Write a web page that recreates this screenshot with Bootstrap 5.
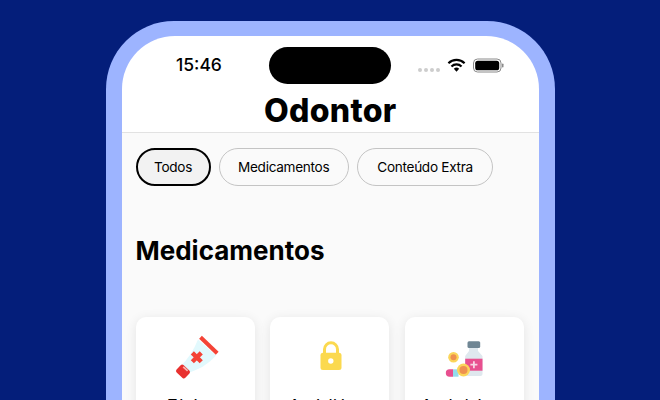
<!DOCTYPE html>
<html lang="pt-BR">
<head>
    <meta charset="UTF-8">
    <title>Odontor</title>
    <link href="https://cdn.jsdelivr.net/npm/bootstrap@5.3.0/dist/css/bootstrap.min.css" rel="stylesheet">
    <style>
        html, body { height: 400px; overflow: hidden; }
        body { background: #041e7a; font-family: Inter, "Liberation Sans", sans-serif; color: #000; }
        .phone-frame { width: 449px; height: 379px; margin: 21px 0 0 106px; padding: 15px 16px 0 15.5px; background: #9db4ff; border-radius: 68px 68px 0 0; }
        .phone-screen { height: 100%; background: #fff; border-radius: 53px 53px 0 0; overflow: hidden; }
        .status-bar { height: 48px; padding-top: 11px; }
        .status-left { width: 147.5px; padding: 8px 0 0 54.5px; font-size: 17.5px; font-weight: 500; line-height: 20px; }
        .island { width: 122px; height: 37px; background: #000; border-radius: 19px; }
        .status-right { padding: 11px 0 0 27px; gap: 7px; }
        .dots { gap: 2px; padding-top: 10px; }
        .dots span { width: 4px; height: 4px; border-radius: 50%; background: #cdcdcd; }
        .app-title { height: 49px; padding-top: 3px; border-bottom: 1px solid #e2e2e2; font-size: 32px; font-weight: 800; line-height: 48px; letter-spacing: .3px; margin: 0; }
        .app-body { background: #fafafa; padding: 15px 14px 0; height: 300px; }
        .chip { height: 38px; padding: 0 18.5px; border: 1px solid #c4c4c4; border-radius: 19px; font-size: 13.6px; letter-spacing: -.3px; line-height: 36px; background: transparent; color: #000; }
        .chip.active { padding: 0 16.5px; border: 2px solid #000; background: #f2f2f2; line-height: 34px; }
        .chip.chip-wide { padding: 0 19.5px; }
        .section-title { font-size: 26px; font-weight: 700; line-height: 32px; margin: 49px 0 50px; }
        .card-row { gap: 15.5px; }
        .med-card { width: 119px; height: 150px; padding-top: 16px; background: #fff; border-radius: 10px; box-shadow: 0 2px 12px rgba(0,0,0,.09); font-size: 14.5px; font-weight: 500; line-height: 20px; }
        .med-card svg { display: block; margin: 0 auto 14px; }
    </style>
</head>
<body>
    <div class="phone-frame">
        <div class="phone-screen">
            <div class="status-bar d-flex">
                <div class="status-left">15:46</div>
                <div class="island"></div>
                <div class="status-right d-flex">
                    <div class="dots d-flex"><span></span><span></span><span></span><span></span></div>
                    <svg width="19" height="15" viewBox="0 0 20 15"><g fill="none" stroke="#000" stroke-width="2.3"><path d="M1.5 5.2a12 12 0 0 1 17 0"/><path d="M4.7 8.500a7.500 7.500 0 0 1 10.600 0"/></g><path d="M7.200 11a4 4 0 0 1 5.600 0L10 14z"/></svg>
                    <svg width="31" height="15" viewBox="0 0 31 15"><rect x=".5" y="1" width="27.500" height="13" rx="4" fill="none" stroke="#8a8a8a"/><rect x="2.200" y="2.700" width="24" height="9.600" rx="2.600"/><rect x="29" y="5.500" width="1.500" height="4" rx=".7" fill="#8a8a8a"/></svg>
                </div>
            </div>
            <h1 class="app-title text-center">Odontor</h1>
            <div class="app-body">
                <div class="d-flex gap-2">
                    <button class="chip active" type="button">Todos</button>
                    <button class="chip" type="button">Medicamentos</button>
                    <button class="chip chip-wide" type="button">Conteúdo Extra</button>
                </div>
                <h2 class="section-title">Medicamentos</h2>
                <div class="d-flex text-center card-row">
                    <div class="med-card">
                        <svg width="48" height="48" viewBox="0 0 48 48">
                            <path d="M27 6.500 45 22.500C36 32 27 37.500 15.500 40L9 34C17 26 23 17 27 6.500z" fill="#e2f9fd"/>
                            <path d="M29.500 4.300 46.200 20.300" stroke="#f44336" stroke-width="4" fill="none"/>
                            <g transform="translate(12 38.500) rotate(43)"><rect x="-6" y="-5" width="12" height="10" rx="2" fill="#e8312f"/><rect x="-3" y="-4.500" width="6" height="1.800" fill="#f9b4ae"/></g>
                            <path d="M25.800 18v12.600M19.500 24.300h12.600" transform="rotate(45 25.800 24.300)" stroke="#f44336" stroke-width="4.400" fill="none"/>
                        </svg>
                        Tópicos
                    </div>
                    <div class="med-card">
                        <svg width="48" height="48" viewBox="0 0 48 48">
                            <path d="M18.500 21v-4.700a6.500 6.500 0 0 1 13 0V21" fill="none" stroke="#fbd94f" stroke-width="3"/>
                            <rect x="14.500" y="19.700" width="21" height="17.300" rx="2.500" fill="#fbd94f"/>
                            <circle cx="24.800" cy="28" r="2.700" fill="#fff"/>
                        </svg>
                        Ansiolíticos
                    </div>
                    <div class="med-card">
                        <svg width="48" height="48" viewBox="0 0 48 48">
                            <path d="M29 15h9v3l4.500 5v18a2 2 0 0 1-2 2H27.200a2 2 0 0 1-2-2V23l3.800-5z" fill="#dfe8ee"/>
                            <rect x="27.500" y="8.300" width="12.700" height="6.700" rx="1.500" fill="#6f8694"/>
                            <rect x="25.200" y="25.700" width="17.300" height="12" fill="#e84f8f"/>
                            <path d="M33.900 28.200v7M30.400 31.700h7" stroke="#f7d3e3" stroke-width="1.800" fill="none"/>
                            <path d="M9.500 36.300h3.500v7.400H9.500a3.700 3.700 0 0 1 0-7.400z" fill="#e84f8f"/>
                            <path d="M13 36.300h5.500v7.400H13z" fill="#93dcec"/>
                            <circle cx="13.500" cy="24.300" r="5.300" fill="#fbd55a"/><circle cx="13.500" cy="24.300" r="3" fill="#ee9150"/>
                            <circle cx="23.500" cy="37" r="6.500" fill="#fbd55a"/><circle cx="23.500" cy="37" r="4" fill="#ee9150"/>
                        </svg>
                        Analgésicos
                    </div>
                </div>
            </div>
        </div>
    </div>
</body>
</html>
